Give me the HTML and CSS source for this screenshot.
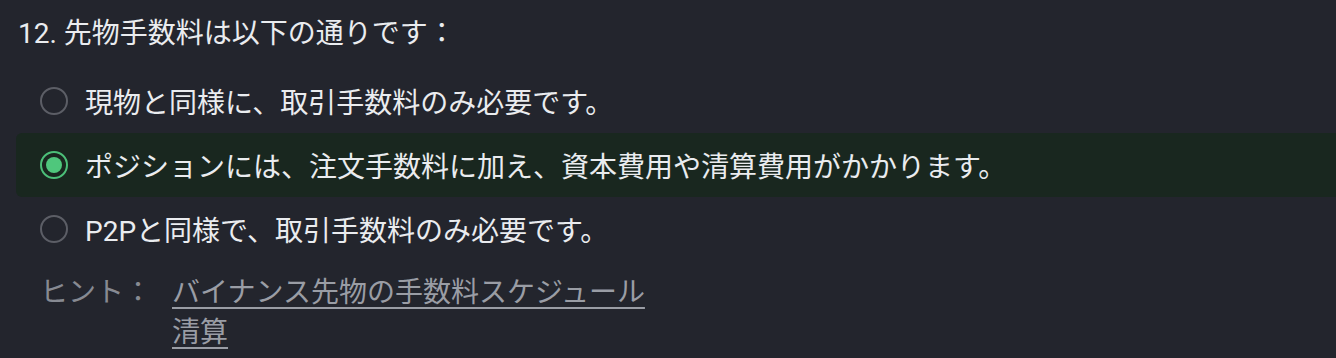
FILE: index.html
```html
<!DOCTYPE html>
<html lang="ja">
<head>
  <meta charset="UTF-8" />
  <meta name="viewport" content="width=device-width, initial-scale=1.0"/>
  <title>先物手数料</title>
  <link rel="stylesheet" href="styles.css">
</head>
<body>
  <div class="quiz">
    <div class="question">12. 先物手数料は以下の通りです：</div>
    <ul class="options">
      <li class="option">
        <span class="radio"></span>
        <span class="label">現物と同様に、取引手数料のみ必要です。</span>
      </li>
      <li class="option selected">
        <span class="radio"></span>
        <span class="label">ポジションには、注文手数料に加え、資本費用や清算費用がかかります。</span>
      </li>
      <li class="option">
        <span class="radio"></span>
        <span class="label">P2Pと同様で、取引手数料のみ必要です。</span>
      </li>
    </ul>
    <div class="hint">
      <span class="hint-title">ヒント：</span>
      <div class="hint-links">
        <a href="#">バイナンス先物の手数料スケジュール</a>
        <a href="#">清算</a>
      </div>
    </div>
  </div>
</body>
</html>
```

FILE: styles.css
```css
body {
  margin: 0;
  background: #23252d;
  font-family: Roboto, "Noto Sans CJK JP", sans-serif;
  color: #eaecef;
}
.quiz {
  padding: 14px 0 0 16px;
}
.question {
  font-size: 28px;
  line-height: 40px;
  padding-left: 2px;
  margin-bottom: 15px;
}
.options {
  list-style: none;
  margin: 0;
  padding: 0;
}
.option {
  display: flex;
  align-items: center;
  height: 64px;
  padding-left: 24px;
  border-radius: 6px;
  font-size: 28px;
}
.option.selected {
  background: #19271f;
  border-radius: 6px 0 0 6px;
}
.radio {
  width: 28px;
  height: 28px;
  box-sizing: border-box;
  border: 2px solid #5c5e66;
  border-radius: 50%;
  margin-right: 17px;
  flex-shrink: 0;
  display: flex;
  align-items: center;
  justify-content: center;
}
.selected .radio {
  border-color: #4cbf78;
}
.selected .radio::after {
  content: "";
  width: 16px;
  height: 16px;
  border-radius: 50%;
  background: #4fc77c;
}
.hint {
  display: grid;
  grid-template-columns: 132px auto;
  margin-top: 12px;
  padding-left: 24px;
  font-size: 28px;
  line-height: 40px;
  color: #878a92;
}
.hint-links {
  display: flex;
  flex-direction: column;
  align-items: flex-start;
}
.hint-links a {
  color: #9a9da5;
  text-decoration: underline;
  text-underline-offset: 5px;
  text-decoration-thickness: 2px;
}
```
